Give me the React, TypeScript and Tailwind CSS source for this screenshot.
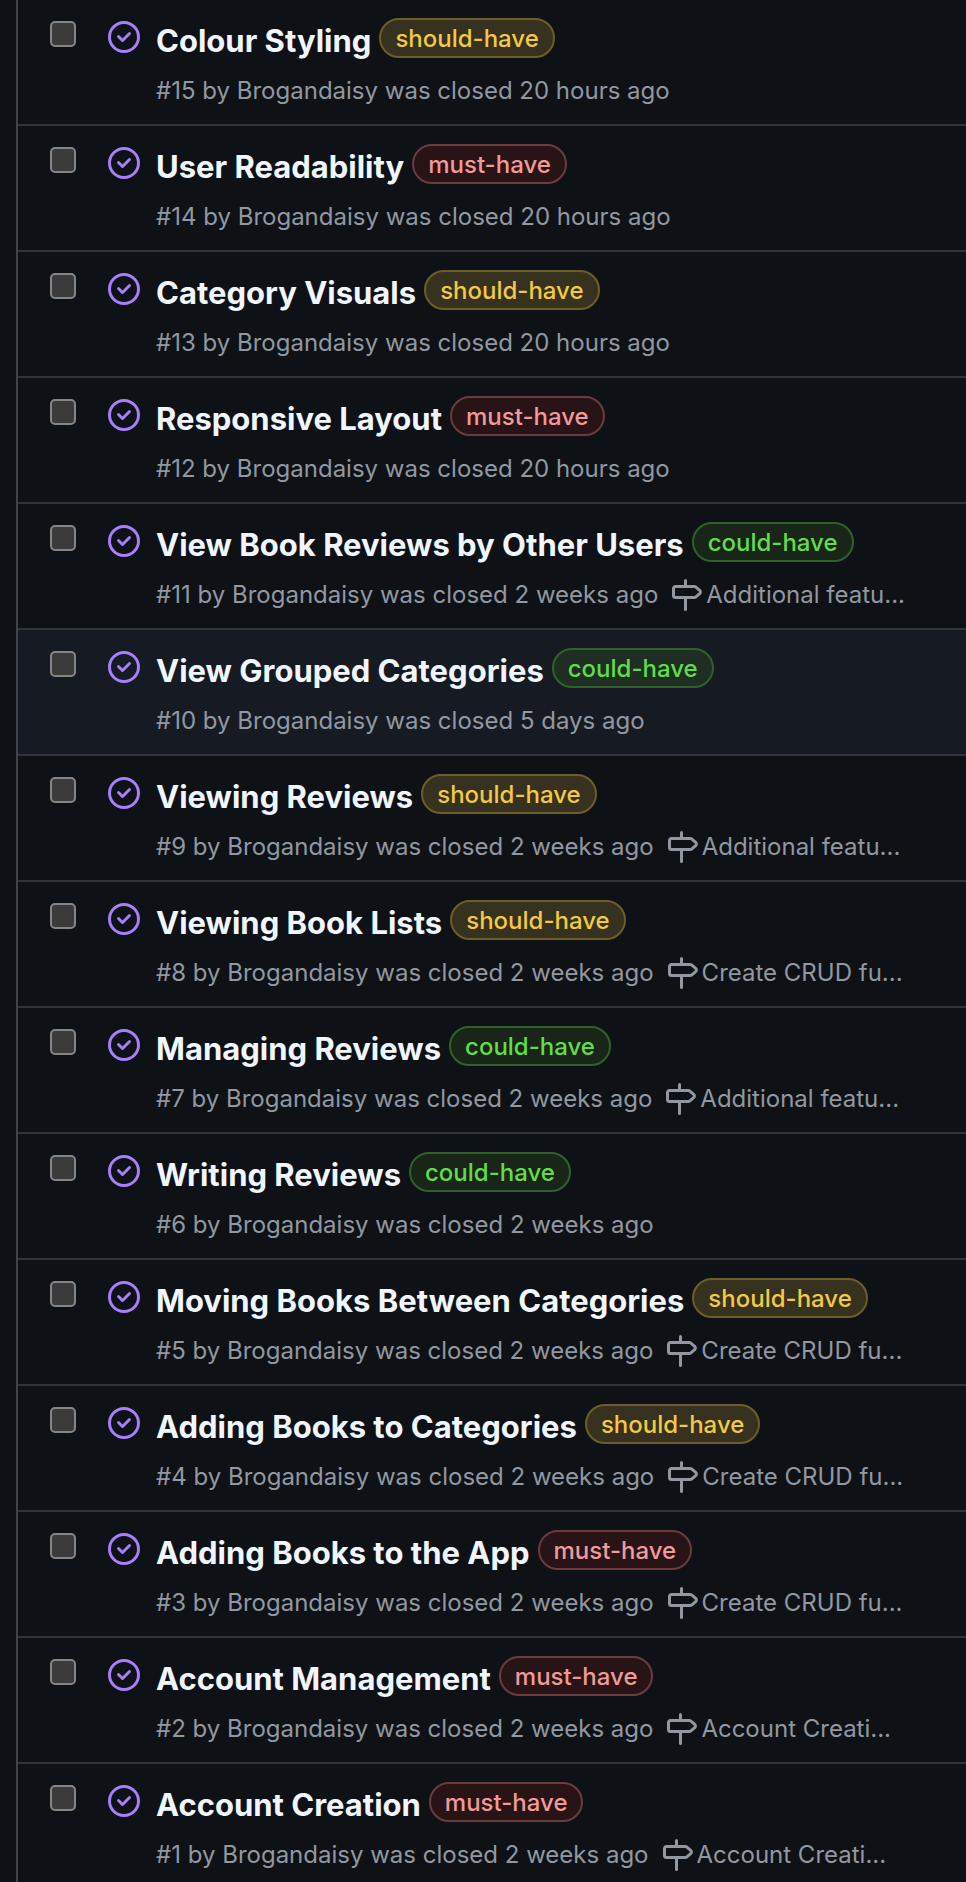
type Priority = "must-have" | "should-have" | "could-have";

interface Issue {
  number: number;
  title: string;
  label: Priority;
  closed: string;
  milestone?: string;
  active?: boolean;
}

const issues: Issue[] = [
  { number: 15, title: "Colour Styling", label: "should-have", closed: "20 hours ago" },
  { number: 14, title: "User Readability", label: "must-have", closed: "20 hours ago" },
  { number: 13, title: "Category Visuals", label: "should-have", closed: "20 hours ago" },
  { number: 12, title: "Responsive Layout", label: "must-have", closed: "20 hours ago" },
  { number: 11, title: "View Book Reviews by Other Users", label: "could-have", closed: "2 weeks ago", milestone: "Additional featu..." },
  { number: 10, title: "View Grouped Categories", label: "could-have", closed: "5 days ago", active: true },
  { number: 9, title: "Viewing Reviews", label: "should-have", closed: "2 weeks ago", milestone: "Additional featu..." },
  { number: 8, title: "Viewing Book Lists", label: "should-have", closed: "2 weeks ago", milestone: "Create CRUD fu..." },
  { number: 7, title: "Managing Reviews", label: "could-have", closed: "2 weeks ago", milestone: "Additional featu..." },
  { number: 6, title: "Writing Reviews", label: "could-have", closed: "2 weeks ago" },
  { number: 5, title: "Moving Books Between Categories", label: "should-have", closed: "2 weeks ago", milestone: "Create CRUD fu..." },
  { number: 4, title: "Adding Books to Categories", label: "should-have", closed: "2 weeks ago", milestone: "Create CRUD fu..." },
  { number: 3, title: "Adding Books to the App", label: "must-have", closed: "2 weeks ago", milestone: "Create CRUD fu..." },
  { number: 2, title: "Account Management", label: "must-have", closed: "2 weeks ago", milestone: "Account Creati..." },
  { number: 1, title: "Account Creation", label: "must-have", closed: "2 weeks ago", milestone: "Account Creati..." },
];

const labelStyles: Record<Priority, string> = {
  "must-have": "border-[#6b3b3e] bg-[#281416] text-[#f29a9a]",
  "should-have": "border-[#6f5d27] bg-[#373120] text-[#f2ca44]",
  "could-have": "border-[#2f6229] bg-[#60c028]/12 text-[#62dd48]",
};

function ClosedIcon() {
  return (
    <svg viewBox="0 0 16 16" className="size-8 shrink-0 fill-[#a77ff8]" role="img" aria-label="Closed issue">
      <path d="M11.28 6.78a.75.75 0 0 0-1.06-1.06L7.25 8.69 5.78 7.22a.75.75 0 0 0-1.06 1.06l2 2a.75.75 0 0 0 1.06 0l3.5-3.5Z" />
      <path d="M16 8A8 8 0 1 1 0 8a8 8 0 0 1 16 0Zm-1.5 0a6.5 6.5 0 1 0-13 0 6.5 6.5 0 0 0 13 0Z" />
    </svg>
  );
}

function MilestoneIcon() {
  return (
    <svg viewBox="0 0 16 16" className="size-8 shrink-0 fill-current" aria-hidden="true">
      <path d="M7.75 0a.75.75 0 0 1 .75.75V3h3.634c.414 0 .814.147 1.13.414l2.07 1.75a1.75 1.75 0 0 1 0 2.672l-2.07 1.75a1.75 1.75 0 0 1-1.13.414H8.5v5.25a.75.75 0 0 1-1.5 0V10H2.75A1.75 1.75 0 0 1 1 8.25v-3.5C1 3.784 1.784 3 2.75 3H7V.75A.75.75 0 0 1 7.75 0Zm4.384 8.5a.25.25 0 0 0 .161-.06l2.07-1.75a.248.248 0 0 0 0-.38l-2.07-1.75a.25.25 0 0 0-.161-.06H2.75a.25.25 0 0 0-.25.25v3.5c0 .138.112.25.25.25h9.384Z" />
    </svg>
  );
}

function IssueRow({ issue }: { issue: Issue }) {
  const id = `issue-${issue.number}`;
  return (
    <li
      className={`flex items-start border-b-2 border-[#2f353d] pt-[18px] pb-3.5 pl-8 last:border-b-0 last:pb-2 ${
        issue.active ? "bg-[#161b23]" : ""
      }`}
    >
      <input
        type="checkbox"
        aria-labelledby={id}
        className="mt-[3px] size-[26px] shrink-0 appearance-none rounded-[5px] border-2 border-[#858585] bg-[#3b3b3b] checked:bg-[#4493f8]"
      />
      <div className="mt-[3px] ml-8">
        <ClosedIcon />
      </div>
      <div className="ml-4 min-w-0 flex-1">
        <div className="flex h-11 items-start gap-2">
          <h3 className="truncate text-[31px] leading-[46px] font-bold text-[#f0f6fc]">
            <a href={`#${id}`} id={id}>{issue.title}</a>
          </h3>
          <a
            href={`#${issue.label}`}
            className={`h-10 shrink-0 rounded-full border-2 px-[14px] text-[24px] leading-[38px] font-medium ${labelStyles[issue.label]}`}
          >
            {issue.label}
          </a>
        </div>
        <div className="mt-2.5 flex h-[38px] items-center text-[24px] text-[#9198a1]">
          <span className="whitespace-nowrap">
            #{issue.number} by <a href="#Brogandaisy">Brogandaisy</a> was closed {issue.closed}
          </span>
          {issue.milestone && (
            <a href="#milestone" className="ml-3 flex items-center gap-1 whitespace-nowrap">
              <MilestoneIcon />
              {issue.milestone}
            </a>
          )}
        </div>
      </div>
    </li>
  );
}

export default function App() {
  return (
    <main className="min-h-screen overflow-hidden bg-[#0e1116] pl-4 font-['Inter',sans-serif]">
      <ul className="border-l-2 border-[#3d444d]">
        {issues.map((issue) => (
          <IssueRow key={issue.number} issue={issue} />
        ))}
      </ul>
    </main>
  );
}
